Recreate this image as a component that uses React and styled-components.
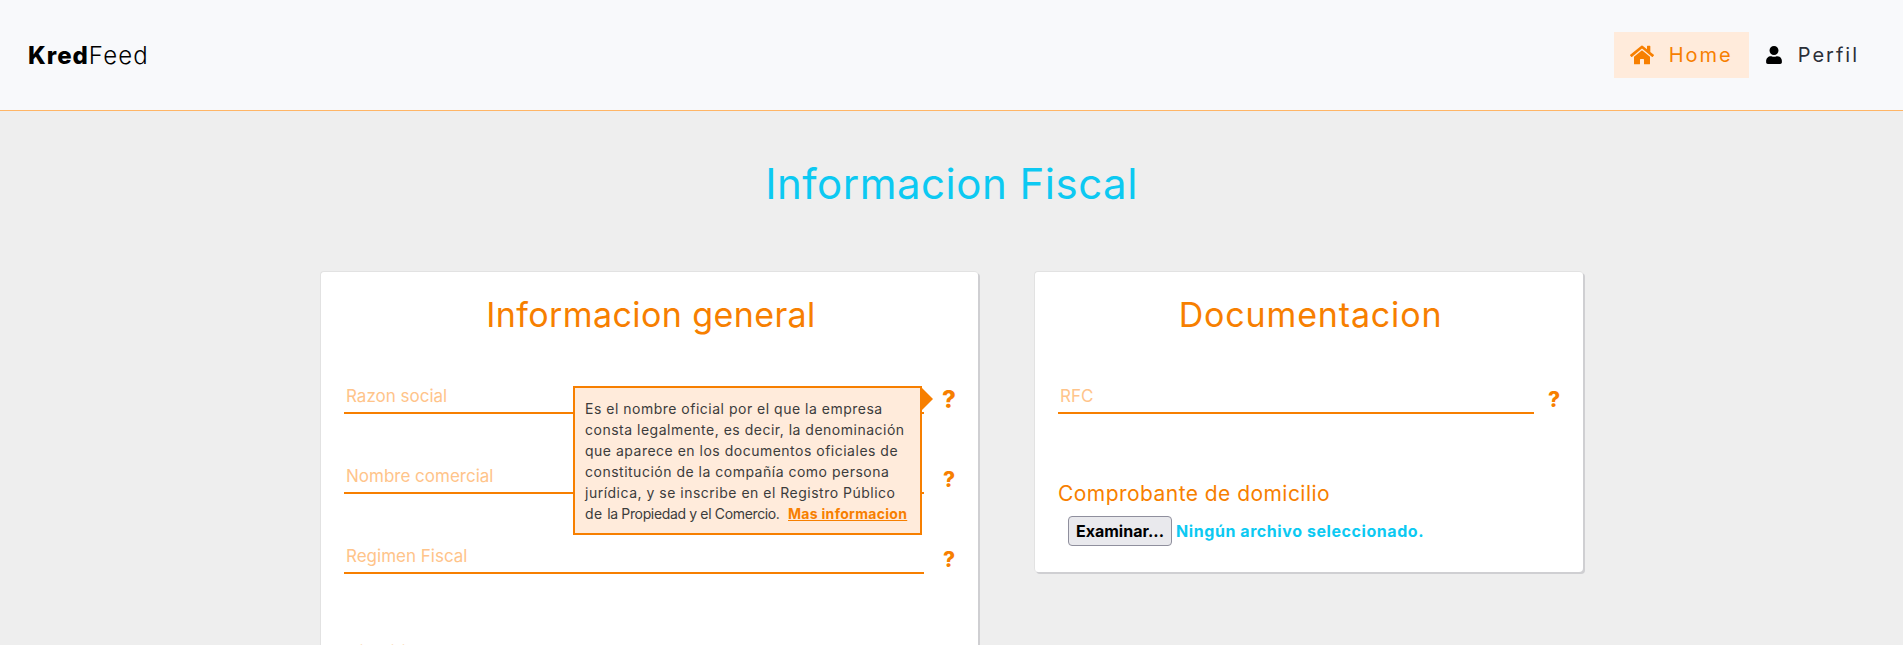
import React from "react";
import styled, { createGlobalStyle } from "styled-components";
import { FaHome, FaUser } from "react-icons/fa";

const ORANGE = "#f77f00";
const FONT = `"Inter", "Noto Sans", sans-serif`;

const Global = createGlobalStyle`
  html, body {
    margin: 0;
    height: 100%;
    overflow: hidden;
  }
  body {
    background: #eeeeee;
    font-family: ${FONT};
  }
  * { box-sizing: border-box; }
`;

const generalFields = [
  { label: "Razon social", big: true },
  { label: "Nombre comercial" },
  { label: "Regimen Fiscal" },
];

const App = () => {
  return (
    <>
      <Global />
      <Navbar>
        <Logo>
          <LogoBold>Kred</LogoBold>
          <LogoLight>Feed</LogoLight>
        </Logo>
        <Nav>
          <NavItem $active>
            <FaHome size={24} />
            <span>Home</span>
          </NavItem>
          <NavItem>
            <FaUser size={18} color="#000" />
            <span>Perfil</span>
          </NavItem>
        </Nav>
      </Navbar>
      <PageTitle>Informacion Fiscal</PageTitle>
      <Columns>
        <Card $width={658} $clipped>
          <CardTitle $spacing={0.4}>Informacion general</CardTitle>
          <Fields>
            {generalFields.map((field) => (
              <FieldRow key={field.label} $gap={14}>
                <Input placeholder={field.label} />
                <Help $big={field.big}>?</Help>
              </FieldRow>
            ))}
            <Tooltip>
              Es el nombre oficial por el que la empresa consta legalmente, es
              decir, la denominación que aparece en los documentos oficiales de
              constitución de la compañía como persona jurídica, y se inscribe
              en el Registro Público de{" "}
              <TightText>la Propiedad y el Comercio.</TightText>{" "}
              <TooltipLink href="#">Mas informacion</TooltipLink>
            </Tooltip>
          </Fields>
          <SectionLabel>Viabilidad</SectionLabel>
        </Card>
        <Card $width={549}>
          <CardTitle $spacing={0.85}>Documentacion</CardTitle>
          <Fields>
            <FieldRow $gap={9}>
              <Input placeholder="RFC" />
              <Help>?</Help>
            </FieldRow>
          </Fields>
          <SectionLabel>Comprobante de domicilio</SectionLabel>
          <FileRow>
            <FileButton type="button">Examinar...</FileButton>
            <FileName>Ningún archivo seleccionado.</FileName>
          </FileRow>
        </Card>
      </Columns>
    </>
  );
};

export default App;

const Navbar = styled.header`
  height: 111px;
  background: #f8f9fb;
  border-bottom: 1px solid #ffb566;
  display: flex;
  align-items: center;
  justify-content: space-between;
  padding: 0 28px;
`;

const Logo = styled.div`
  display: flex;
  align-items: baseline;
  font-size: 24px;
  color: #000;
`;

const LogoBold = styled.span`
  font-weight: 800;
  letter-spacing: 1px;
`;

const LogoLight = styled.span`
  font-weight: 300;
  letter-spacing: 1.1px;
`;

const Nav = styled.nav`
  display: flex;
  align-items: center;
`;

const NavItem = styled.a`
  display: flex;
  align-items: center;
  gap: 15px;
  height: 46px;
  padding: 0 16px;
  font-size: 20px;
  letter-spacing: 2px;
  color: ${({ $active }) => ($active ? ORANGE : "#2b2f38")};
  background: ${({ $active }) => ($active ? "#ffebdb" : "transparent")};
`;

const PageTitle = styled.h1`
  margin: 48px 0 0;
  text-align: center;
  font-size: 42px;
  line-height: 50px;
  font-weight: 400;
  letter-spacing: 0.5px;
  color: #0cc9f2;
`;

const Columns = styled.main`
  display: flex;
  align-items: flex-start;
  gap: 56px;
  margin: 62px 0 0 320px;
`;

const Card = styled.section`
  position: relative;
  width: ${({ $width }) => $width}px;
  height: ${({ $clipped }) => ($clipped ? "520px" : "auto")};
  padding: 24px 20px 26px 23px;
  background: #fff;
  border-radius: 4px;
  border: 1px solid #e2e2e2;
  border-width: 1px 0 0 1px;
  box-shadow: 2px 2px 0 #cfcfd2;
  flex-shrink: 0;
`;

const CardTitle = styled.h2`
  margin: 0;
  text-align: center;
  font-size: 34px;
  line-height: 38px;
  font-weight: 400;
  letter-spacing: ${({ $spacing }) => $spacing}px;
  color: ${ORANGE};
`;

const Fields = styled.div`
  position: relative;
  display: flex;
  flex-direction: column;
  gap: 40px;
  margin-top: 40px;
`;

const FieldRow = styled.div`
  display: flex;
  align-items: center;
  gap: ${({ $gap }) => $gap}px;
`;

const Input = styled.input`
  flex: 1;
  min-width: 0;
  height: 40px;
  padding: 6px 2px 0;
  border: 0;
  border-bottom: 2px solid ${ORANGE};
  background: transparent;
  outline: none;
  font-family: ${FONT};
  font-size: 17px;

  &::placeholder {
    color: #ffc48a;
    opacity: 1;
  }
`;

const Help = styled.span`
  width: 22px;
  margin: 10px -2px 0 0;
  text-align: center;
  font-size: ${({ $big }) => ($big ? "24px" : "21px")};
  font-weight: 800;
  color: ${ORANGE};
`;

const Tooltip = styled.div`
  position: absolute;
  top: 12px;
  left: 229px;
  width: 349px;
  height: 149px;
  padding: 10px;
  background: #ffebdb;
  border: 2px solid ${ORANGE};
  font-size: 14px;
  line-height: 21px;
  letter-spacing: 0.5px;
  color: #3c3c3c;

  &::after {
    content: "";
    position: absolute;
    top: 0;
    right: -13px;
    border-left: 11px solid ${ORANGE};
    border-top: 11px solid transparent;
    border-bottom: 11px solid transparent;
  }
`;

const TightText = styled.span`
  letter-spacing: -0.35px;
`;

const TooltipLink = styled.a`
  margin-left: 4px;
  font-weight: 700;
  letter-spacing: 0.3px;
  white-space: nowrap;
  color: ${ORANGE};
  text-decoration: underline;
`;

const SectionLabel = styled.div`
  margin-top: 67px;
  font-size: 21px;
  line-height: 26px;
  letter-spacing: 0.45px;
  color: ${ORANGE};
`;

const FileRow = styled.div`
  display: flex;
  align-items: center;
  gap: 4px;
  margin: 9px 0 0 10px;
`;

const FileButton = styled.button`
  height: 30px;
  padding: 0 7px;
  border: 1px solid #8f8f9d;
  border-radius: 4px;
  background: #e9e9ed;
  color: #000;
  font-family: ${FONT};
  font-size: 16px;
  font-weight: 700;
`;

const FileName = styled.span`
  font-size: 16px;
  font-weight: 700;
  letter-spacing: 0.57px;
  color: #0cc9f2;
`;
